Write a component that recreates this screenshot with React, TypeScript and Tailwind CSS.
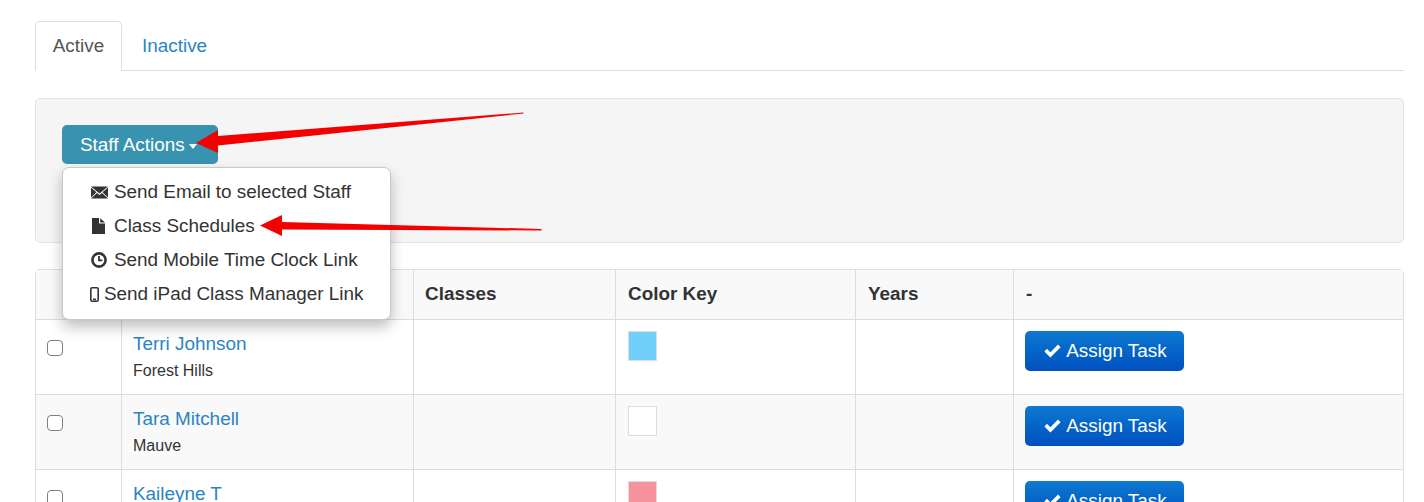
import React from 'react';

const rows = [
  { name: 'Terri Johnson', place: 'Forest Hills', color: 'bg-[#72cff9]' },
  { name: 'Tara Mitchell', place: 'Mauve', color: 'bg-white' },
  { name: 'Kaileyne T', place: '', color: 'bg-[#f5929b]' },
];

const EnvelopeIcon = () => (
  <svg viewBox="0 0 17 13" className="h-[13px] w-[17px] fill-[#333]">
    <path d="M0 0.5h17L8.500 7.500z" />
    <path d="M0 1.500V11.500l5.500-5.200z" />
    <path d="M17 1.500V11.500l-5.500-5.200z" />
    <path d="M0 12.500h17L11 7 8.500 9 6 7z" />
  </svg>
);

const FileIcon = () => (
  <svg viewBox="0 0 13 16" className="h-[16px] w-[13px] fill-[#333]">
    <path d="M0 0h7v5.500h6V16H0z" />
    <path d="M8.200 0.300 13 4.400H8.200z" />
  </svg>
);

const ClockIcon = () => (
  <svg viewBox="0 0 16 16" className="h-[16px] w-[16px]">
    <circle cx="8" cy="8" r="6.600" fill="none" stroke="#333" strokeWidth="2.600" />
    <path d="M8 4v4.400h3.400" fill="none" stroke="#333" strokeWidth="1.800" />
  </svg>
);

const PhoneIcon = () => (
  <svg viewBox="0 0 9 15" className="h-[15px] w-[9px]">
    <rect x="0.800" y="0.800" width="7.400" height="13.400" rx="1.400" fill="none" stroke="#333" strokeWidth="1.600" />
    <rect x="3" y="11.600" width="3" height="1.600" fill="#333" />
  </svg>
);

const CheckIcon = () => (
  <svg viewBox="0 0 17 14" className="h-[14px] w-[17px] fill-white">
    <path d="M0.400 7.400 3 4.800l3.400 3.400L14 0.600l2.600 2.600L6.400 13.400z" />
  </svg>
);

function StaffMenu() {
  return (
    <div className="absolute left-[26px] top-[68px] z-10 h-[153px] w-[329px] rounded-[7px] border border-[#c8c8c8] bg-white py-[7px] text-[#333] shadow-[0_7px_14px_rgba(0,0,0,0.25)]">
      <div className="flex h-[34px] items-center pl-[28px]">
        <EnvelopeIcon />
        <span className="ml-[6px]">Send Email to selected Staff</span>
      </div>
      <div className="flex h-[34px] items-center pl-[29px]">
        <FileIcon />
        <span className="ml-[9px]">Class Schedules</span>
      </div>
      <div className="flex h-[34px] items-center pl-[28px]">
        <ClockIcon />
        <span className="ml-[7px]">Send Mobile Time Clock Link</span>
      </div>
      <div className="flex h-[34px] items-center pl-[27px]">
        <PhoneIcon />
        <span className="ml-[5px]">Send iPad Class Manager Link</span>
      </div>
    </div>
  );
}

export default function App() {
  return (
    <div className="relative h-[502px] overflow-hidden bg-white pl-[35px] pr-[20px] pt-[21px] font-['Liberation_Sans',Arial,sans-serif] text-[18.9px] text-[#333]">
      {/* Pestañas */}
      <div className="flex h-[50px] border-b border-[#ddd]">
        <div className="flex h-[50px] w-[87px] items-center justify-center rounded-t-[5px] border border-b-white border-[#ddd] bg-white text-[#555]">
          Active
        </div>
        <div className="flex h-[49px] items-center px-[20px] pt-[1px] text-[#2a84c4]">Inactive</div>
      </div>

      {/* Acciones */}
      <div className="relative mt-[27px] h-[145px] rounded-[5px] border border-[#e3e3e3] bg-[#f5f5f5] pl-[26px] pt-[26px]">
        <button className="flex h-[39px] w-[156px] items-center rounded-[5px] bg-[#3793b0] pl-[18px] pt-[1px] text-white">
          Staff Actions
          <span className="ml-[4px] mt-[2px] border-x-[4px] border-t-[5px] border-x-transparent border-t-white" />
        </button>
        <StaffMenu />
      </div>

      {/* Tabla */}
      <table className="mt-[26px] w-[1369px] table-fixed border-separate border-spacing-0 rounded-t-[5px] border-l border-t border-r border-[#ddd]">
        <colgroup>
          <col className="w-[86px]" />
          <col className="w-[292px]" />
          <col className="w-[202px]" />
          <col className="w-[240px]" />
          <col className="w-[158px]" />
          <col />
        </colgroup>
        <thead>
          <tr className="h-[50px] bg-[#f9f9f9] text-left font-bold">
            <th className="border-b border-r border-[#ddd]"></th>
            <th className="border-b border-r border-[#ddd]"></th>
            <th className="border-b border-r border-[#ddd] pl-[11px]">Classes</th>
            <th className="border-b border-r border-[#ddd] pl-[12px]">Color Key</th>
            <th className="border-b border-r border-[#ddd] pl-[12px]">Years</th>
            <th className="border-b border-[#ddd] pl-[12px]">-</th>
          </tr>
        </thead>
        <tbody>
          {rows.map((row, i) => (
            <tr key={row.name} className={i % 2 === 1 ? 'h-[75px] bg-[#f9f9f9]' : 'h-[75px] bg-white'}>
              <td className="border-b border-r border-[#ddd] pl-[11px] pt-[12px] align-top">
                <div className="mt-[8px] h-[16px] w-[16px] rounded-[4px] border border-[#808080] bg-white" />
              </td>
              <td className="border-b border-r border-[#ddd] pl-[11px] pt-[11px] align-top">
                <div className="leading-[25px] text-[#2a84c4]">{row.name}</div>
                <div className="mt-[4px] text-[16px] leading-[22px]">{row.place}</div>
              </td>
              <td className="border-b border-r border-[#ddd]"></td>
              <td className="border-b border-r border-[#ddd] pl-[12px] pt-[11px] align-top">
                <div className={`h-[30px] w-[29px] border border-[#ddd] ${row.color}`} />
              </td>
              <td className="border-b border-r border-[#ddd]"></td>
              <td className="border-b border-[#ddd] pl-[11px] pt-[11px] align-top">
                <button className="flex h-[40px] w-[159px] items-center justify-center gap-[5px] rounded-[5px] bg-gradient-to-b from-[#0f78d0] to-[#0250c0] pl-[2px] text-white">
                  <CheckIcon />
                  Assign Task
                </button>
              </td>
            </tr>
          ))}
        </tbody>
      </table>

      {/* Flechas de anotación */}
      <svg className="pointer-events-none absolute left-0 top-0 z-20 h-[502px] w-[1424px]" viewBox="0 0 1424 502">
        <path d="M523.500 112.500 218 136V130L196 143l22 10v-7.500L523.500 113.500z" fill="#f50000" />
        <path d="M541.500 229 282 222v-7L260 225.500 282 236v-6.500L541.500 230.500z" fill="#f50000" />
      </svg>
    </div>
  );
}
